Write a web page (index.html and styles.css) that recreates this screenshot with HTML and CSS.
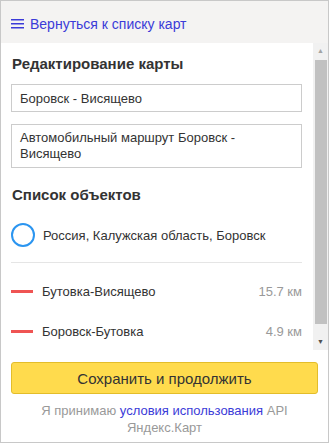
FILE: index.html
```html
<!DOCTYPE html>
<html lang="ru">
  <head>
    <meta charset="UTF-8" />
    <title>Редактирование карты</title>
    <link rel="stylesheet" href="styles.css">
  </head>
  <body>
    <div class="panel">
      <header class="panel-header">
        <a class="back-link" href="#">
          <svg class="burger" width="13" height="10" viewBox="0 0 13 10">
            <path d="M0 0.75H13M0 4.75H13M0 8.75H13" stroke="#3b3bd8" stroke-width="1.5" />
          </svg>
          Вернуться к списку карт
        </a>
      </header>

      <div class="panel-body">
        <div class="scroll-area">
          <h2>Редактирование карты</h2>
          <input class="field" type="text" value="Боровск - Висящево" />
          <textarea class="field area" rows="2">Автомобильный маршрут Боровск - Висящево</textarea>

          <h2 class="list-title">Список объектов</h2>
          <ul class="objects">
            <li class="obj point">
              <span class="mark circle"></span>
              <span class="name">Россия, Калужская область, Боровск</span>
            </li>
            <li class="obj route">
              <span class="mark line"></span>
              <span class="name">Бутовка-Висящево</span>
              <span class="dist">15.7 км</span>
            </li>
            <li class="obj route">
              <span class="mark line"></span>
              <span class="name">Боровск-Бутовка</span>
              <span class="dist">4.9 км</span>
            </li>
          </ul>
        </div>
        <div class="scrollbar">
          <span class="arrow">&#9650;</span>
          <div class="track"><div class="thumb"></div></div>
          <span class="arrow">&#9660;</span>
        </div>
      </div>

      <footer class="panel-footer">
        <button type="button" class="save">Сохранить и продолжить</button>
        <p class="terms">
          Я принимаю <a href="#">условия использования</a> API<br />Яндекс.Карт
        </p>
      </footer>
    </div>
  </body>
</html>
```

FILE: styles.css
```css
body {
  margin: 0;
  font-family: "Liberation Sans", Arial, sans-serif;
  color: #333;
  background-color: #fff;
}
.panel {
  width: 329px;
  height: 443px;
  box-sizing: border-box;
  border: 1px solid #c8c8c8;
  display: flex;
  flex-direction: column;
  overflow: hidden;
}
.panel-header {
  height: 42px;
  background-color: #f4f3f2;
  display: flex;
  align-items: center;
  padding-left: 10px;
  flex-shrink: 0;
}
.back-link {
  color: #3b3bd8;
  text-decoration: none;
  font-size: 14px;
  display: flex;
  align-items: center;
  gap: 6px;
  padding-top: 4px;
}
.burger {
  display: block;
}
.panel-body {
  display: flex;
  height: 307px;
  flex-shrink: 0;
}
.scroll-area {
  flex: 1;
  overflow: hidden;
  padding: 12px 11px 0 10px;
}
h2 {
  margin: 0 0 11px 1px;
  font-size: 15px;
  line-height: 18px;
  font-weight: bold;
  color: #333;
}
.field {
  display: block;
  width: 100%;
  box-sizing: border-box;
  border: 1px solid #ccc;
  border-radius: 0;
  font-family: inherit;
  font-size: 13px;
  color: #333;
  padding: 0 8px;
  margin: 0;
}
input.field {
  height: 28px;
}
.area {
  height: 44px;
  padding: 5px 8px;
  line-height: 16px;
  resize: none;
  overflow: hidden;
  margin-top: 12px;
}
.list-title {
  margin-top: 18px;
  margin-bottom: 0;
}
.objects {
  list-style: none;
  margin: 0;
  padding: 0;
}
.obj {
  display: flex;
  align-items: center;
  height: 40px;
  font-size: 13px;
  color: #333;
}
.obj.point {
  height: 42px;
  margin-top: 10px;
  border-bottom: 1px solid #e5e5e5;
  margin-bottom: 8px;
  padding-bottom: 6px;
}
.mark {
  flex-shrink: 0;
}
.circle {
  width: 20px;
  height: 20px;
  border: 2px solid #2b95f0;
  border-radius: 50%;
  margin-right: 8px;
}
.line {
  width: 22px;
  height: 3px;
  background-color: #ef5453;
  margin-right: 9px;
}
.name {
  flex: 1;
}
.dist {
  color: #999;
}
.scrollbar {
  width: 15px;
  background-color: #f1f1f1;
  display: flex;
  flex-direction: column;
  align-items: center;
}
.arrow {
  font-size: 7px;
  color: #a3a3a3;
  height: 16px;
  line-height: 16px;
}
.arrow:last-child {
  color: #505050;
}
.track {
  flex: 1;
  width: 100%;
  padding: 1px 1px 10px 2px;
  box-sizing: border-box;
}
.thumb {
  height: 100%;
  background-color: #c1c1c1;
}
.panel-footer {
  padding: 12px 10px 0 10px;
  text-align: center;
}
.save {
  width: 100%;
  height: 32px;
  background-color: #ffdb4d;
  border: 1px solid #e3bd2a;
  border-radius: 3px;
  font-family: inherit;
  font-size: 15px;
  color: #333;
  cursor: pointer;
}
.terms {
  margin: 8px 20px 0;
  font-size: 13px;
  line-height: 17px;
  color: #999;
}
.terms a {
  color: #3b3bd8;
  text-decoration: none;
}
```
